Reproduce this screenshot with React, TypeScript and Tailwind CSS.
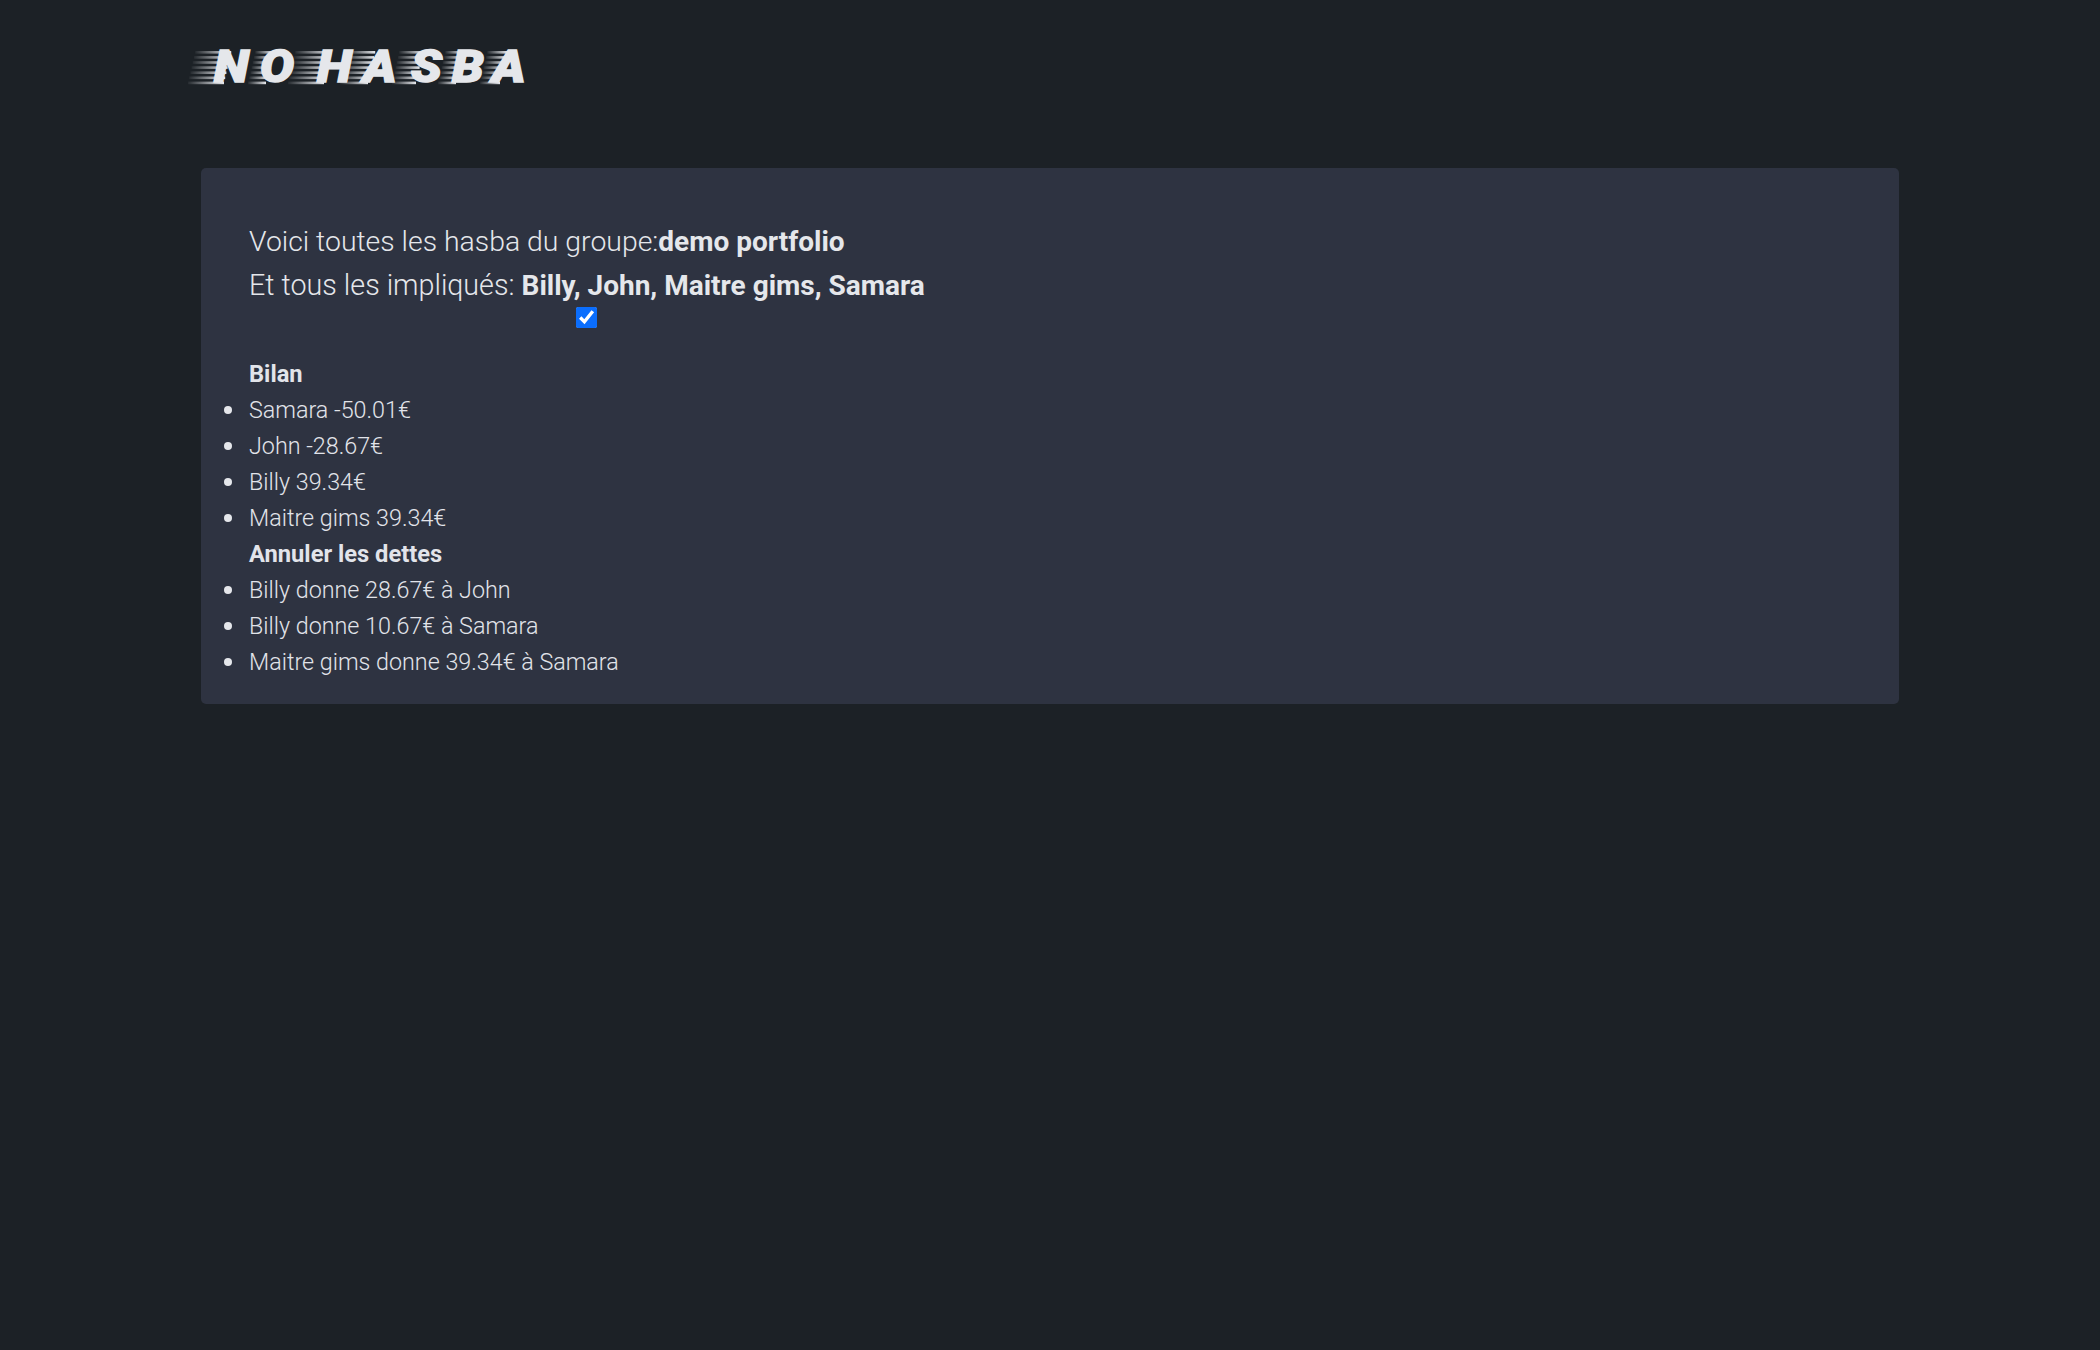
import React from "react";

const lines = [0, 1, 2, 3, 4, 5, 6];

function Streak({ x, w }: { x: number; w: number }) {
  return (
    <g>
      {lines.map((i) => (
        <rect key={i} x={x + (6 - i) * 1.2} y={20 + i * 5.1} width={w} height={2.6} fill="url(#fade)" />
      ))}
    </g>
  );
}

function Logo() {
  const letters: [string, number][] = [
    ["N", 30],
    ["O", 76],
    ["H", 133],
    ["A", 179],
    ["S", 227],
    ["B", 268],
    ["A", 308],
  ];
  const streaks: [number, number][] = [
    [4, 36],
    [64, 18],
    [104, 36],
    [156, 28],
    [208, 24],
    [254, 18],
    [296, 20],
  ];
  return (
    <svg width="350" height="62" viewBox="0 0 350 62" className="block">
      <defs>
        <linearGradient id="fade" x1="0" x2="1" y1="0" y2="0">
          <stop offset="0" stopColor="#e5e7eb" stopOpacity="0.05" />
          <stop offset="1" stopColor="#e5e7eb" stopOpacity="1" />
        </linearGradient>
      </defs>
      {streaks.map(([x, w], i) => (
        <Streak key={i} x={x} w={w} />
      ))}
      {letters.map(([c, x], i) => (
        <text
          key={i}
          transform={`translate(${x} 51) scale(1.13 1)`}
          fill="#e5e7eb"
          stroke="#e5e7eb"
          strokeWidth="1.5"
          fontSize="45"
          fontWeight="900"
          fontStyle="italic"
          fontFamily="Roboto, sans-serif"
        >
          {c}
        </text>
      ))}
    </svg>
  );
}

function Item({ children }: { children: React.ReactNode }) {
  return (
    <li className="relative h-[36px] before:absolute before:left-[-25px] before:top-[14px] before:h-2 before:w-2 before:rounded-full before:bg-[#e5e7eb] before:content-['']">
      {children}
    </li>
  );
}

export default function App() {
  return (
    <div className="min-h-[1350px] bg-[#1c2126] font-['Roboto',sans-serif] text-[#e5e7eb]">
      <header className="pl-[184px] pt-[31px] h-[168px]">
        <Logo />
      </header>
      <main className="ml-[201px] w-[1698px] rounded-[5px] bg-[#2e3341] pl-[48px] pt-[52px] pb-[24px]">
        <p className="h-[44px] text-[28.4px] leading-[44px] font-light">
          Voici toutes les hasba du groupe:<b className="text-[28px] font-bold">demo portfolio</b>
        </p>
        <p className="h-[44px] text-[28.7px] leading-[43px] font-light">
          Et tous les impliqués: <b className="text-[28px] font-bold">Billy, John, Maitre gims, Samara</b>
        </p>
        <div className="flex h-[18px] items-center pl-[327px]">
          <input type="checkbox" defaultChecked readOnly className="h-[21px] w-[21px] accent-[#0b6efd]" />
        </div>
        <ul className="mt-[30px] list-none text-[23.3px] leading-[36px] font-light text-[#e2e4ea]">
          <li className="h-[36px] text-[23.7px] font-bold">Bilan</li>
          <Item>Samara -50.01€</Item>
          <Item>John -28.67€</Item>
          <Item>Billy 39.34€</Item>
          <Item>Maitre gims 39.34€</Item>
          <li className="h-[36px] text-[23.7px] font-bold">Annuler les dettes</li>
          <Item>Billy donne 28.67€ à John</Item>
          <Item>Billy donne 10.67€ à Samara</Item>
          <Item>Maitre gims donne 39.34€ à Samara</Item>
        </ul>
      </main>
    </div>
  );
}
